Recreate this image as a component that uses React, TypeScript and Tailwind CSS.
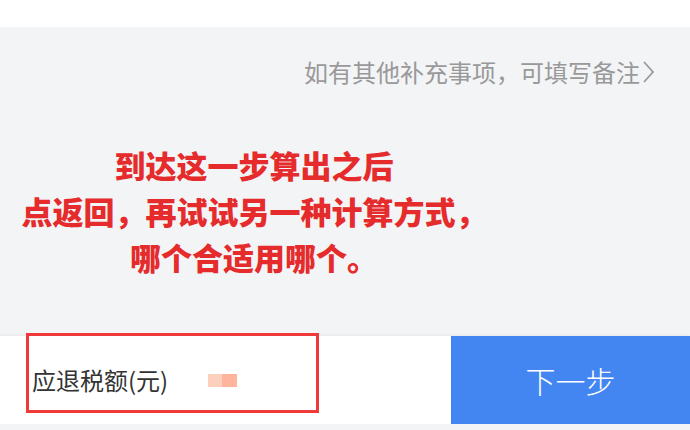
import React from "react";

export default function App() {
  const font = { fontFamily: '"Noto Sans CJK SC", "Noto Sans", sans-serif' };
  return (
    <div
      className="w-[690px] h-[430px] bg-[#f3f4f6] flex flex-col overflow-hidden"
      style={font}
    >
      <div className="h-[27px] bg-white shrink-0" />
      <div className="flex-1 flex flex-col">
        <div className="flex justify-end items-center pr-[34px] pt-[28px] text-[24px] leading-[34px] text-[#999] font-normal">
          <span>如有其他补充事项，可填写备注</span>
          <svg width="14" height="24" viewBox="0 0 14 24" className="ml-[2px]">
            <path d="M2 2 L11 12 L2 22" fill="none" stroke="#999" strokeWidth="1.8" />
          </svg>
        </div>
        <div className="w-[508px] mt-[53px] flex flex-col items-center text-[#e52b2b] text-[31px] font-black leading-[46px]">
          <div>到达这一步算出之后</div>
          <div>点返回，再试试另一种计算方式，</div>
          <div>哪个合适用哪个。</div>
        </div>
      </div>
      <div className="h-[88px] shrink-0 bg-white flex shadow-[0_-1px_3px_rgba(0,0,0,0.06)]">
        <div className="relative flex-1 flex items-center pl-[32px]">
          <span className="text-[24px] text-[#333] leading-none">应退税额(元)</span>
          <div className="ml-[40px] flex">
            <div className="w-[14px] h-[13px] bg-[#fdd0be]" />
            <div className="w-[15px] h-[13px] bg-[#ffb49c]" />
          </div>
          <div className="absolute left-[26px] top-[-3px] w-[293px] h-[80px] border-[3px] border-[#f03a3a]" />
        </div>
        <div className="w-[239px] bg-[#4386f2] flex items-center justify-center text-white text-[30px] font-light">
          下一步
        </div>
      </div>
      <div className="h-[6px] shrink-0 bg-[#f3f4f6]" />
    </div>
  );
}
